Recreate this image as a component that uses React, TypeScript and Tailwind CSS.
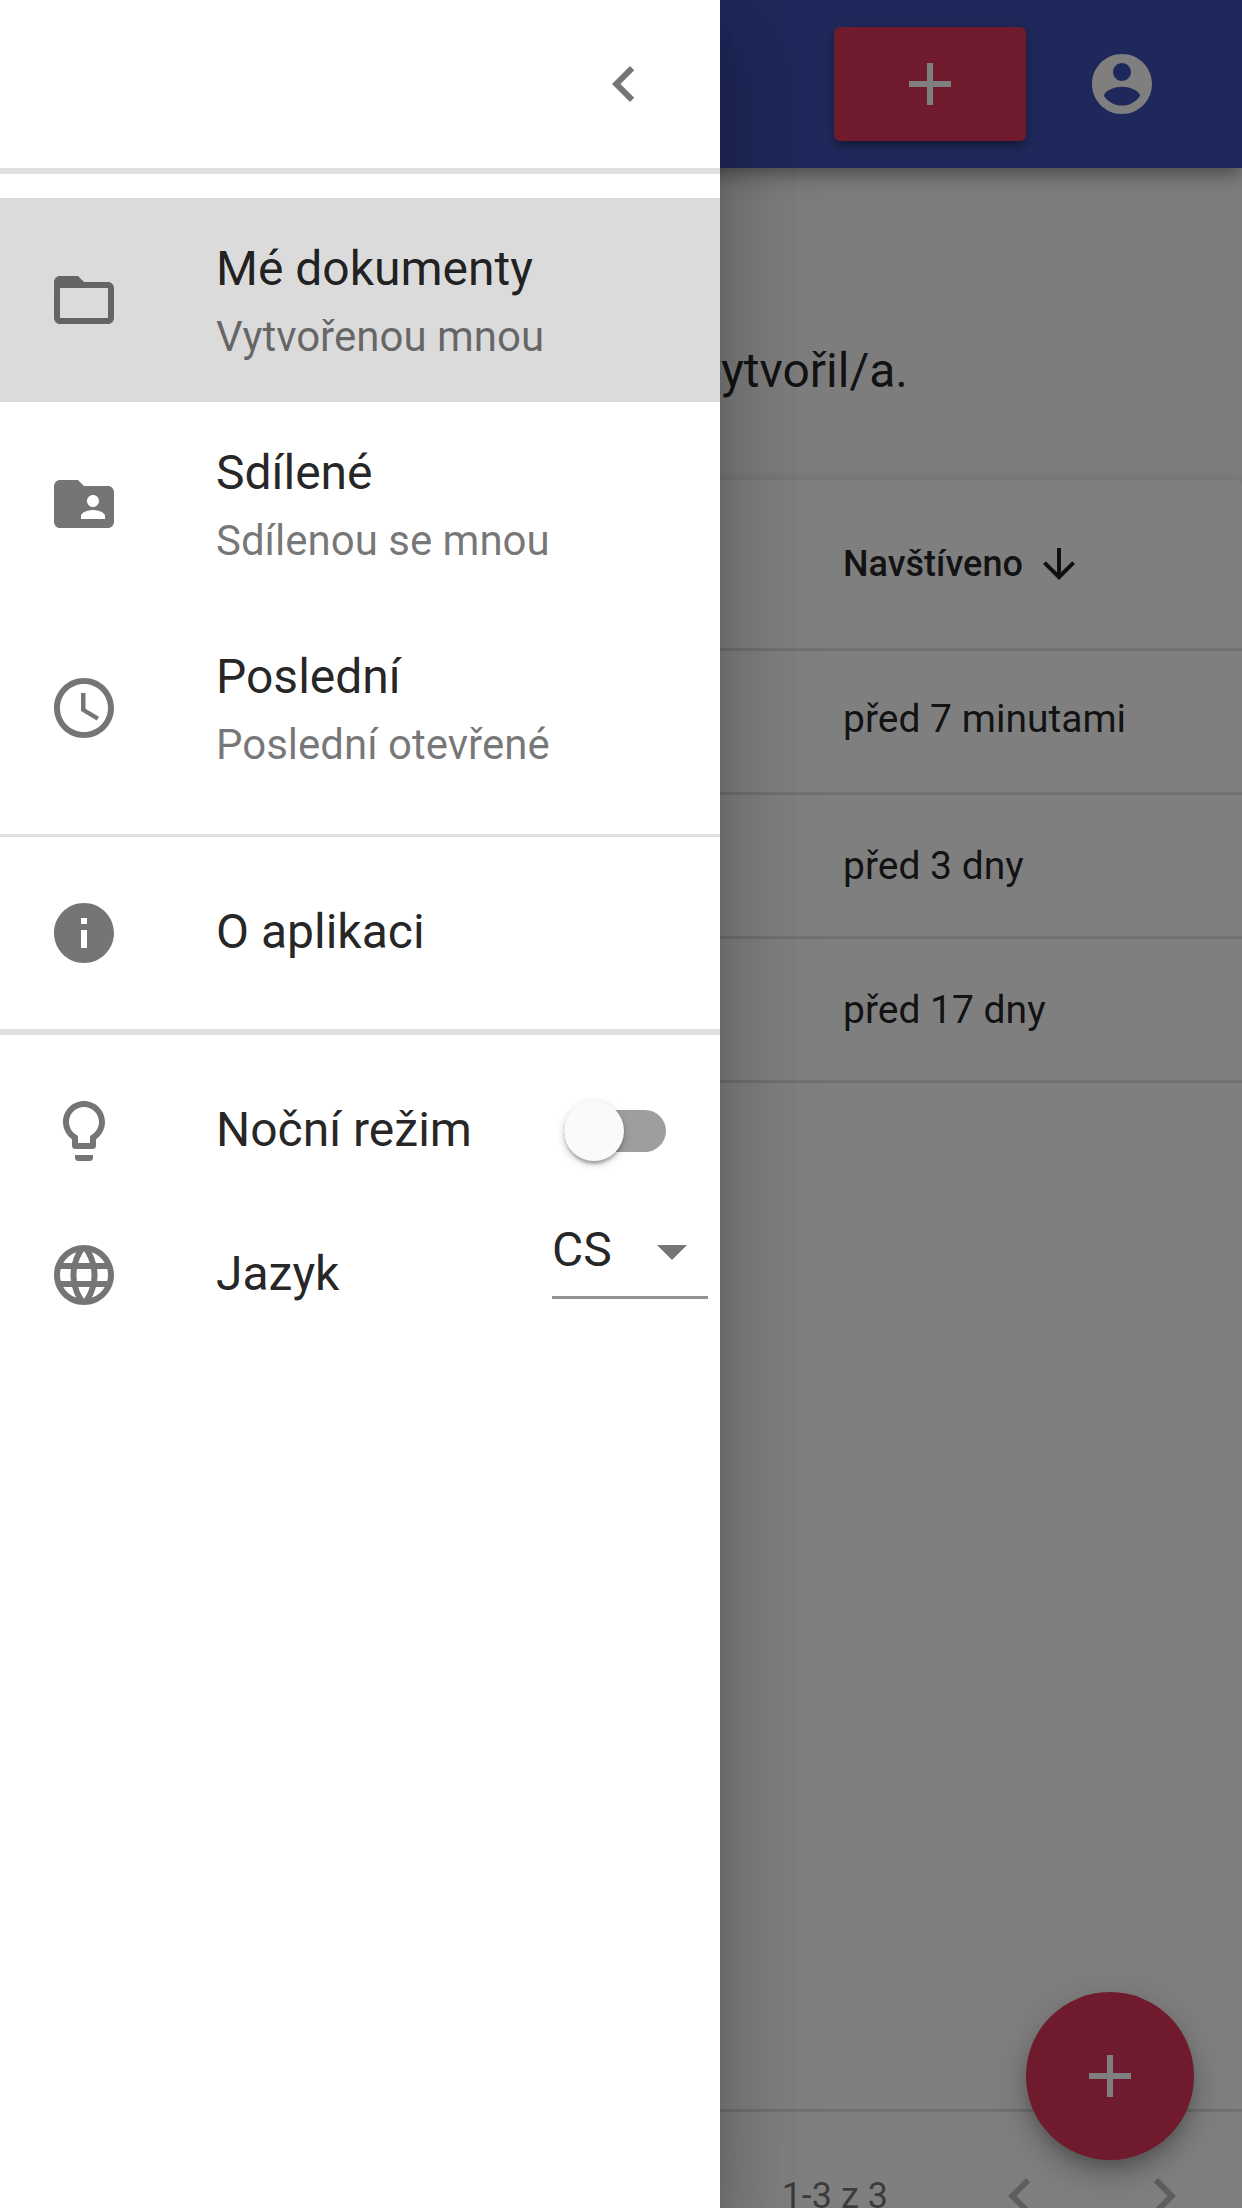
import type { ReactNode } from 'react';

const paths = {
  chevronLeft: 'M15.41 7.41L14 6l-6 6 6 6 1.41-1.41L10.83 12z',
  chevronRight: 'M10 6L8.59 7.41 13.17 12l-4.58 4.59L10 18l6-6z',
  add: 'M19 13h-6v6h-2v-6H5v-2h6V5h2v6h6v2z',
  account:
    'M12 2C6.48 2 2 6.48 2 12s4.48 10 10 10 10-4.48 10-10S17.52 2 12 2zm0 3c1.66 0 3 1.34 3 3s-1.34 3-3 3-3-1.34-3-3 1.34-3 3-3zm0 14.2c-2.5 0-4.71-1.28-6-3.22.03-1.99 4-3.08 6-3.08 1.99 0 5.97 1.09 6 3.08-1.29 1.94-3.5 3.22-6 3.22z',
  folder:
    'M20 6h-8l-2-2H4c-1.1 0-1.99.9-1.99 2L2 18c0 1.1.9 2 2 2h16c1.1 0 2-.9 2-2V8c0-1.1-.9-2-2-2zm0 12H4V8h16v10z',
  folderShared:
    'M20 6h-8l-2-2H4c-1.1 0-1.99.9-1.99 2L2 18c0 1.1.9 2 2 2h16c1.1 0 2-.9 2-2V8c0-1.1-.9-2-2-2zm-5 3c1.1 0 2 .9 2 2s-.9 2-2 2-2-.9-2-2 .9-2 2-2zm4 8h-8v-1c0-1.33 2.67-2 4-2s4 .67 4 2v1z',
  schedule:
    'M11.99 2C6.47 2 2 6.48 2 12s4.47 10 9.99 10C17.52 22 22 17.52 22 12S17.52 2 11.99 2zM12 20c-4.42 0-8-3.58-8-8s3.58-8 8-8 8 3.58 8 8-3.58 8-8 8zm.5-13H11v6l5.25 3.15.75-1.23-4.5-2.67z',
  info: 'M12 2C6.48 2 2 6.48 2 12s4.48 10 10 10 10-4.48 10-10S17.52 2 12 2zm1 15h-2v-6h2v6zm0-8h-2V7h2v2z',
  bulb: 'M9 21c0 .55.45 1 1 1h4c.55 0 1-.45 1-1v-1H9v1zm3-19C8.14 2 5 5.14 5 9c0 2.38 1.19 4.47 3 5.74V17c0 .55.45 1 1 1h6c.55 0 1-.45 1-1v-2.26c1.81-1.27 3-3.36 3-5.74 0-3.86-3.14-7-7-7zm2.85 11.1l-.85.6V16h-4v-2.3l-.85-.6C7.8 12.16 7 10.63 7 9c0-2.76 2.24-5 5-5s5 2.24 5 5c0 1.63-.8 3.16-2.15 4.1z',
  globe:
    'M11.99 2C6.47 2 2 6.48 2 12s4.47 10 9.99 10C17.52 22 22 17.52 22 12S17.52 2 11.99 2zm6.93 6h-2.95c-.32-1.25-.78-2.45-1.38-3.56 1.84.63 3.37 1.91 4.33 3.56zM12 4.04c.83 1.2 1.48 2.53 1.91 3.96h-3.82c.43-1.43 1.08-2.76 1.91-3.96zM4.26 14C4.1 13.36 4 12.69 4 12s.1-1.36.26-2h3.38c-.08.66-.14 1.32-.14 2 0 .68.06 1.34.14 2H4.26zm.82 2h2.95c.32 1.25.78 2.45 1.38 3.56-1.84-.63-3.37-1.9-4.33-3.56zm2.95-8H5.08c.96-1.66 2.49-2.93 4.33-3.56C8.81 5.55 8.35 6.75 8.03 8zM12 19.96c-.83-1.2-1.48-2.53-1.91-3.96h3.82c-.43 1.43-1.08 2.76-1.91 3.96zM14.34 14H9.66c-.09-.66-.16-1.32-.16-2 0-.68.07-1.35.16-2h4.68c.09.65.16 1.32.16 2 0 .68-.07 1.34-.16 2zm.25 5.56c.6-1.11 1.06-2.31 1.38-3.56h2.95c-.96 1.65-2.49 2.93-4.33 3.56zM16.36 14c.08-.66.14-1.32.14-2 0-.68-.06-1.34-.14-2h3.38c.16.64.26 1.31.26 2s-.1 1.36-.26 2h-3.38z',
  dropDown: 'M7 10l5 5 5-5z',
  arrowDown: 'M20 12l-1.41-1.41L13 16.17V4h-2v12.17l-5.58-5.59L4 12l8 8 8-8z',
};

function Icon({ name, className = 'size-[72px]' }: { name: keyof typeof paths; className?: string }) {
  return (
    <svg viewBox="0 0 24 24" fill="currentColor" className={`shrink-0 ${className}`}>
      <path d={paths[name]} />
    </svg>
  );
}

function MenuItem({
  icon,
  primary,
  secondary,
  selected,
  children,
}: {
  icon: keyof typeof paths;
  primary: string;
  secondary?: string;
  selected?: boolean;
  children?: ReactNode;
}) {
  return (
    <li
      className={`flex items-center pl-12 ${secondary ? 'h-[204px]' : 'h-36'} ${selected ? 'bg-black/14' : ''}`}
    >
      <Icon name={icon} className="mr-24 size-[72px] text-black/54" />
      <div className="flex-1">
        <div className={`text-[48px] leading-[70px] ${secondary ? 'py-px' : 'pb-0.5'}`}>{primary}</div>
        {secondary && (
          <div className="pt-0.5 text-[42px] leading-[60px] text-black/54">{secondary}</div>
        )}
      </div>
      {children}
    </li>
  );
}

function Drawer() {
  return (
    <aside className="absolute inset-y-0 left-0 flex w-[720px] flex-col bg-white shadow-[0_24px_30px_-15px_rgba(0,0,0,0.2),0_48px_72px_6px_rgba(0,0,0,0.14),0_18px_90px_15px_rgba(0,0,0,0.12)]">
      <div className="flex h-[168px] items-center justify-end pr-6">
        <button className="p-9 text-black/54">
          <Icon name="chevronLeft" />
        </button>
      </div>
      <div className="h-1.5 bg-black/12" />
      <ul className="py-6">
        <MenuItem icon="folder" primary="Mé dokumenty" secondary="Vytvořenou mnou" selected />
        <MenuItem icon="folderShared" primary="Sdílené" secondary="Sdílenou se mnou" />
        <MenuItem icon="schedule" primary="Poslední" secondary="Poslední otevřené" />
      </ul>
      <div className="h-[3px] bg-black/12" />
      <ul className="py-6">
        <MenuItem icon="info" primary="O aplikaci" />
      </ul>
      <div className="h-1.5 bg-black/12" />
      <ul className="py-6">
        <MenuItem icon="bulb" primary="Noční režim">
          <button className="mr-[54px] flex h-[42px] w-[102px] items-center rounded-full bg-[#9e9e9e]">
            <span className="size-[60px] shrink-0 rounded-full bg-[#fafafa] shadow-[0_3px_9px_rgba(0,0,0,0.2),0_3px_3px_rgba(0,0,0,0.14),0_6px_3px_-3px_rgba(0,0,0,0.12)]" />
          </button>
        </MenuItem>
        <MenuItem icon="globe" primary="Jazyk">
          <button className="mr-3 flex h-24 w-[156px] items-start justify-between self-start border-b-3 border-black/42 pt-3">
            <span className="pt-1.5 text-[48px] leading-[57px]">CS</span>
            <Icon name="dropDown" className="size-[72px] text-black/54" />
          </button>
        </MenuItem>
      </ul>
    </aside>
  );
}

function Row({ children, className = 'pt-0.5' }: { children: ReactNode; className?: string }) {
  return (
    <div className={`flex h-36 items-center border-b-3 border-[#e0e0e0] pl-[843px] text-[39px] ${className}`}>
      <span>{children}</span>
    </div>
  );
}

export default function App() {
  return (
    <div className="relative flex h-[2208px] w-[1242px] flex-col overflow-hidden bg-[#fafafa] font-['Roboto',sans-serif] text-black/87">
      <header className="z-10 flex h-[168px] shrink-0 items-center justify-end bg-[#3f51b5] pr-12 text-white shadow-[0_6px_12px_-3px_rgba(0,0,0,0.2),0_12px_15px_rgba(0,0,0,0.14),0_3px_30px_rgba(0,0,0,0.12)]">
        <button className="mr-6 flex h-[114px] w-48 items-center justify-center rounded-[6px] bg-[#e0345a] shadow-[0_3px_15px_rgba(0,0,0,0.2),0_6px_6px_rgba(0,0,0,0.14),0_9px_3px_-6px_rgba(0,0,0,0.12)]">
          <Icon name="add" />
        </button>
        <button className="p-9">
          <Icon name="account" />
        </button>
      </header>

      <div className="flex h-[312px] shrink-0 items-start justify-end pt-[167px] pr-[334px]">
        <p className="text-[48px] leading-[72px]">vytvořil/a.</p>
      </div>

      <main className="flex h-[1800px] shrink-0 flex-col rounded-[6px] bg-white shadow-[0_3px_15px_rgba(0,0,0,0.2),0_6px_6px_rgba(0,0,0,0.14),0_9px_3px_-6px_rgba(0,0,0,0.12)]">
        <div className="flex h-[171px] items-center gap-3 border-b-3 border-[#e0e0e0] pl-[843px] text-[36px] font-medium">
          <span>Navštíveno</span>
          <Icon name="arrowDown" className="size-12" />
        </div>
        <Row className="pb-1">před 7 minutami</Row>
        <Row>před 3 dny</Row>
        <Row>před 17 dny</Row>
        <div className="mt-auto flex h-[171px] items-center justify-end border-t-3 border-[#e0e0e0] pr-1.5">
          <span className="mr-[60px] text-[36px] text-black/54">1-3 z 3</span>
          <button className="p-9 text-black/26">
            <Icon name="chevronLeft" />
          </button>
          <button className="p-9 text-black/26">
            <Icon name="chevronRight" />
          </button>
        </div>
      </main>

      <button className="absolute right-12 bottom-12 flex size-[168px] items-center justify-center rounded-full bg-[#e0345a] text-white shadow-[0_9px_15px_-3px_rgba(0,0,0,0.2),0_18px_30px_rgba(0,0,0,0.14),0_3px_54px_rgba(0,0,0,0.12)]">
        <Icon name="add" />
      </button>

      <div className="absolute inset-0 z-20 bg-black/50" />
      <div className="absolute inset-0 z-30">
        <Drawer />
      </div>
    </div>
  );
}
